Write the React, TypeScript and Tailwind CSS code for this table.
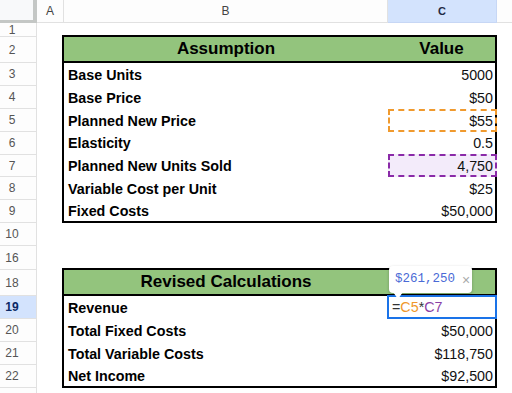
import React from 'react';

const ROWS: { n: string; h: string; active?: boolean }[] = [
  { n: '1', h: 'h-[14px]' },
  { n: '2', h: 'h-[26px]' },
  { n: '3', h: 'h-[23px]' },
  { n: '4', h: 'h-[23px]' },
  { n: '5', h: 'h-[23px]' },
  { n: '6', h: 'h-[23px]' },
  { n: '7', h: 'h-[22px]' },
  { n: '8', h: 'h-[23px]' },
  { n: '9', h: 'h-[23px]' },
  { n: '10', h: 'h-[23px]' },
  { n: '16', h: 'h-[24px]' },
  { n: '18', h: 'h-[26px]' },
  { n: '19', h: 'h-[23px]', active: true },
  { n: '20', h: 'h-[23px]' },
  { n: '21', h: 'h-[23px]' },
  { n: '22', h: 'h-[23px]' },
  { n: '', h: 'h-[23px]' },
];

const ASSUMPTIONS = [
  { label: 'Base Units', value: '5000' },
  { label: 'Base Price', value: '$50' },
  { label: 'Planned New Price', value: '$55', mark: 'orange' },
  { label: 'Elasticity', value: '0.5' },
  { label: 'Planned New Units Sold', value: '4,750', mark: 'purple' },
  { label: 'Variable Cost per Unit', value: '$25' },
  { label: 'Fixed Costs', value: '$50,000' },
];

const REVISED = [
  { label: 'Revenue', value: '', selected: true },
  { label: 'Total Fixed Costs', value: '$50,000' },
  { label: 'Total Variable Costs', value: '$118,750' },
  { label: 'Net Income', value: '$92,500' },
];

function TableRow({ label, value, h, mark, selected }: { label: string; value: string; h: string; mark?: string; selected?: boolean }) {
  return (
    <div className={`flex ${h} items-center`}>
      <div className="w-[324px] pl-[4px] pt-[2px] font-bold text-[14.3px] text-black">{label}</div>
      <div className="relative h-full flex-1 flex items-center justify-end pr-[2px] pt-[2px] text-[14.3px] text-[#111]">
        {mark === 'orange' && (
          <div className="absolute top-0 bottom-0 left-0 -right-[2px] border-2 border-dashed border-[#f09a2e]" />
        )}
        {mark === 'purple' && (
          <div className="absolute top-0 bottom-0 left-0 -right-[2px] border-2 border-dashed border-[#8a2aa8] bg-[#f3ebfa]" />
        )}
        {selected && (
          <>
            <div className="absolute -top-px bottom-0 -left-px -right-[2px] border-2 border-[#1a73e8] bg-white flex items-center pl-[3px] pt-[1px] text-[14.3px]">
              <span className="text-[#333]">=</span>
              <span className="text-[#f0982b]">C5</span>
              <span className="text-[#333]">*</span>
              <span className="text-[#8b3fa6]">C7</span>
            </div>
            <div className="absolute bottom-full left-px mb-[3px] h-[27px] w-[83px] bg-white rounded-sm shadow-[0_1px_3px_rgba(0,0,0,0.25)] flex items-center pl-[6px] gap-[7px]">
              <span className="text-[12.5px] text-[#4a6ad6] font-['Liberation_Mono',monospace]">$261,250</span>
              <span className="text-[14px] text-[#aaa] leading-none">×</span>
              <div className="absolute -bottom-[6px] left-[4px] w-0 h-0 border-l-[5px] border-r-[5px] border-t-[7px] border-l-transparent border-r-transparent border-t-white" />
            </div>
          </>
        )}
        {!selected && <span className="relative">{value}</span>}
      </div>
    </div>
  );
}

export default function App() {
  const assumptionHeights = ['h-[23px]', 'h-[23px]', 'h-[23px]', 'h-[22px]', 'h-[23px]', 'h-[23px]', 'h-[21px]'];
  const revisedHeights = ['h-[23px]', 'h-[23px]', 'h-[23px]', 'h-[21px]'];

  return (
    <div className="w-[512px] h-[393px] overflow-hidden bg-white flex flex-col font-['Liberation_Sans',Arial,sans-serif]">
      {/* Column headers */}
      <div className="flex h-[23px] shrink-0 text-[12px] text-[#444]">
        <div className="w-[37px] bg-[#f8f9fa] border-r-4 border-b-[3px] border-[#c4c7c5]" />
        <div className="w-[27px] flex items-center justify-center border-r border-b border-[#e1e1e1] bg-[#fdfdfd]">A</div>
        <div className="w-[324px] flex items-center justify-center border-r border-b border-[#e1e1e1] bg-[#fdfdfd]">B</div>
        <div className="w-[109px] flex items-center justify-center border-r border-b border-[#c7d7f5] bg-[#d3e3fd] text-[#1f2a44] font-bold text-[11px]">C</div>
        <div className="flex-1 border-b border-[#e1e1e1] bg-[#fdfdfd]" />
      </div>

      <div className="flex flex-1">
        {/* Row headers */}
        <div className="w-[37px] shrink-0 flex flex-col border-r border-[#e1e1e1] bg-[#fdfdfd]">
          {ROWS.map((r, i) => (
            <div
              key={i}
              className={`${r.h} shrink-0 pr-[12px] flex items-center justify-center border-b border-[#e1e1e1] text-[12px] ${
                r.active ? 'bg-[#d3e3fd] text-[#0b2a66] font-bold' : 'text-[#555]'
              }`}
            >
              {r.n}
            </div>
          ))}
        </div>

        {/* Sheet area */}
        <div className="flex-1 flex flex-col pl-[25px]">
          <div className="mt-[12px] w-[435px] border-2 border-black flex flex-col">
            <div className="flex h-[24px] bg-[#93c47d] border-b-2 border-black box-content items-center font-bold text-[17px] text-black">
              <div className="w-[324px] text-center">Assumption</div>
              <div className="flex-1 text-center">Value</div>
            </div>
            {ASSUMPTIONS.map((r, i) => (
              <TableRow key={r.label} label={r.label} value={r.value} mark={r.mark} h={assumptionHeights[i]} />
            ))}
          </div>

          <div className="mt-[45px] w-[435px] border-2 border-black flex flex-col">
            <div className="flex h-[24px] bg-[#93c47d] border-b-2 border-black box-content items-center font-bold text-[17px] text-black">
              <div className="w-[324px] text-center">Revised Calculations</div>
              <div className="flex-1" />
            </div>
            {REVISED.map((r, i) => (
              <TableRow key={r.label} label={r.label} value={r.value} selected={r.selected} h={revisedHeights[i]} />
            ))}
          </div>
        </div>
      </div>
    </div>
  );
}
